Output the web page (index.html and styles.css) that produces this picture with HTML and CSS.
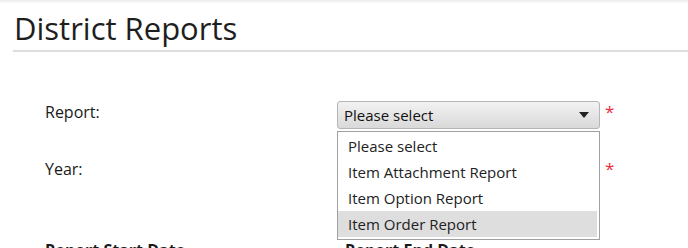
FILE: index.html
```html
<!DOCTYPE html>
<html>
<head>
<meta charset="utf-8">
<link rel="stylesheet" href="styles.css">
</head>
<body>
<div class="topshade"></div>
<h1 class="title">District Reports</h1>
<div class="form">
  <div class="label">Report:</div>
  <div class="field">
    <div class="select-wrap">
      <div class="select">
        <span>Please select</span>
        <svg class="arrow" width="10" height="6" viewBox="0 0 10 6"><path d="M0 0H10L5 6Z" fill="#222"/></svg>
      </div>
      <ul class="menu">
        <li>Please select</li>
        <li>Item Attachment Report</li>
        <li>Item Option Report</li>
        <li class="hover">Item Order Report</li>
      </ul>
    </div>
    <span class="req">*</span>
  </div>
  <div class="label year">Year:</div>
  <div class="field year"><div class="select-space"></div><span class="req">*</span></div>
  <div class="label dates">Report Start Date</div>
  <div class="field dates"><span class="label-b">Report End Date</span></div>
</div>
</body>
</html>
```
FILE: styles.css
```css
html, body { margin: 0; padding: 0; background: #fff; }
body { font-family: "Open Sans", "Noto Sans", sans-serif; color: #1a1a1a; position: relative; }
.topshade { height: 4px; background: linear-gradient(#ececec, #fff); }
.title {
  margin: 0 0 0 13px;
  padding: 6px 0 4px 1px;
  font-weight: normal;
  font-size: 31px;
  line-height: 36px;
  color: #1e1e1e;
  border-bottom: 2px solid #ddd;
}
.form {
  display: grid;
  grid-template-columns: 292px 1fr;
  padding: 49px 0 0 45px;
}
.label { font-size: 16px; line-height: 22px; color: #1a1a1a; }
.field { display: flex; align-items: flex-start; }
.select-wrap { position: relative; width: 263px; }
.select {
  box-sizing: border-box;
  height: 28px;
  border: 1px solid #b5b5b5;
  border-radius: 3px;
  background: linear-gradient(#f2f2f2, #d9d9d9);
  display: flex; align-items: center; justify-content: space-between;
  padding: 0 10px 0 6px;
  font-size: 15px;
  color: #111;
}
.menu {
  position: absolute; left: 0; top: 30px;
  box-sizing: border-box; width: 263px;
  margin: 0; padding: 1px 0 2px;
  list-style: none;
  background: #fff;
  border: 1px solid #a0a0a0;
  font-size: 15px;
  z-index: 2;
}
.menu li { height: 26px; line-height: 26px; padding-left: 10px; margin: 0 2px 0 0; color: #222; }
.menu li.hover { background: #dedede; }
.req { color: #ee2a3c; font-size: 17px; margin: 3px 0 0 5px; line-height: 16px; }
.year { margin-top: 29px; }
.select-space { width: 263px; }
.dates { margin-top: 59px; font-weight: bold; }
.label-b { font-size: 16px; line-height: 22px; margin-left: 8px; }
```
